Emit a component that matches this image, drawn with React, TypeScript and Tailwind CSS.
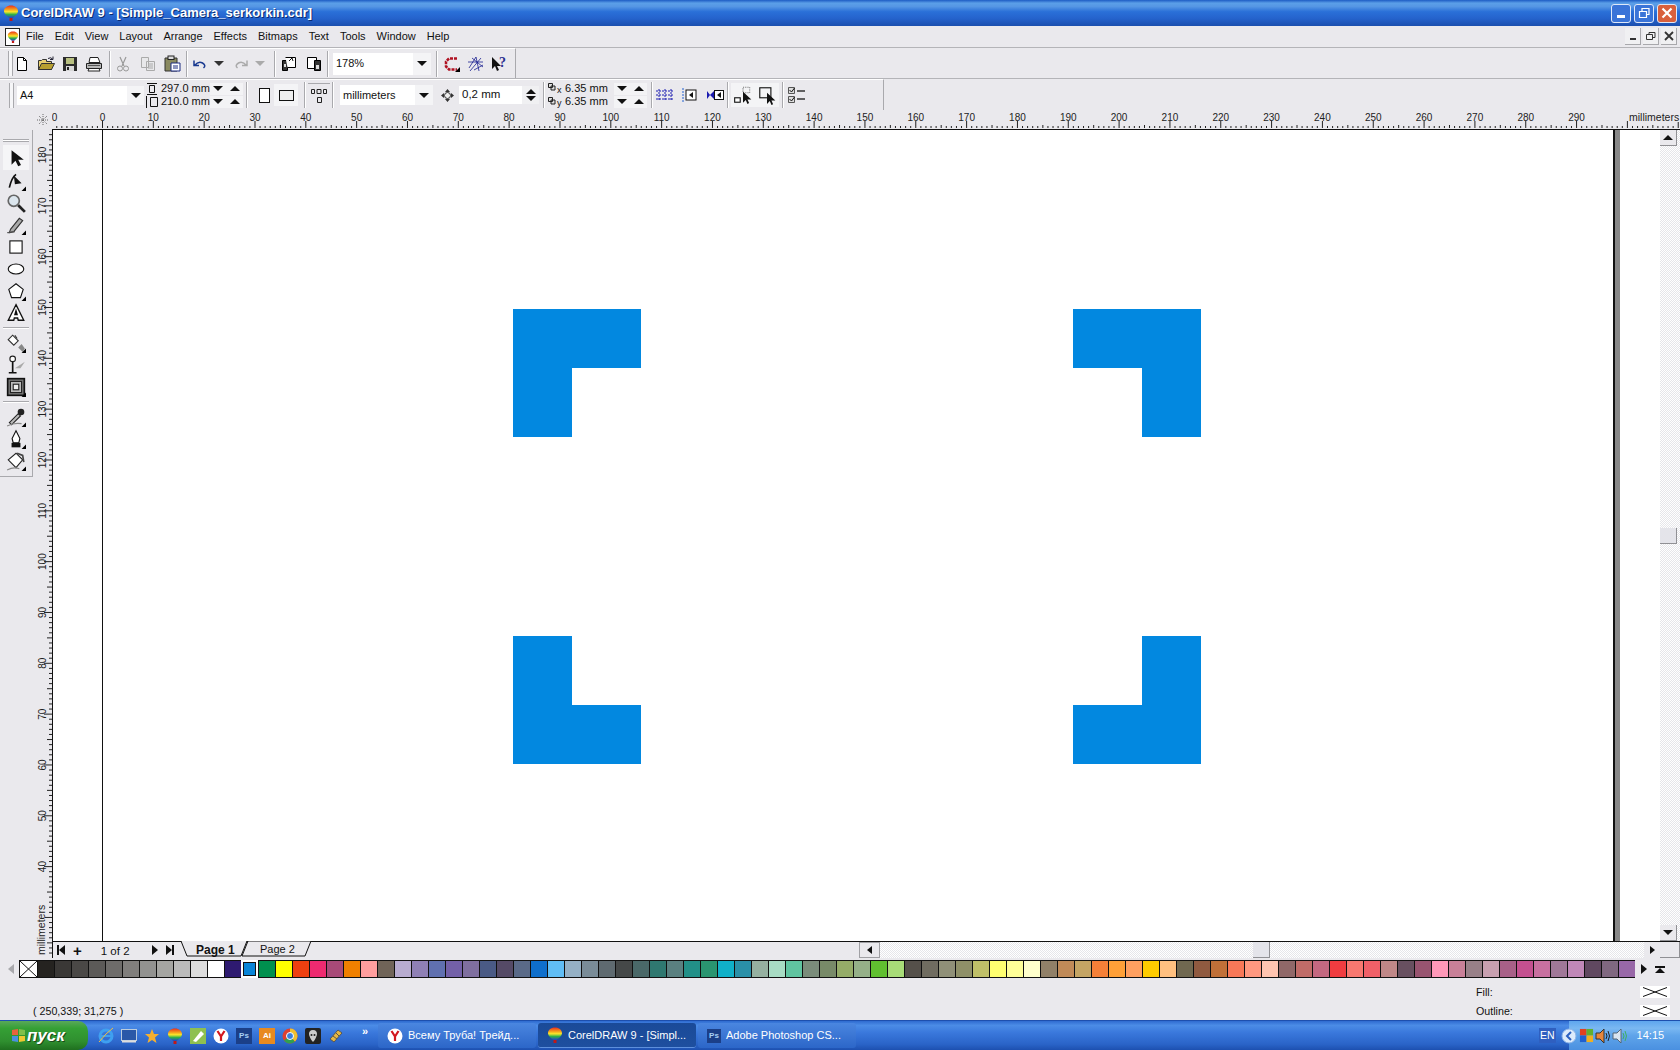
import React from "react";

const MM = 5.083;
const palette = ["#252320","#3a3836","#4a4846","#5c5a58","#6e6c6a","#807e7c","#929290","#a5a5a2","#bbbbbb","#dddddd","#ffffff","#2e1a70","#0a85d8","#00904e","#ffff00","#ee4010","#ee2a70","#a84a78","#f08000","#ff9e9e","#706458","#b8acd0","#8f80b5","#6070b0","#7360a8","#7f6f9f","#4a5a85","#554a66","#5a6a88","#0f6fcc","#60bdf5","#95b0c5","#7a8c98","#5f6a70","#454848","#4a6868","#2f7870","#5a8080","#229088","#2a9570","#10b0c8","#2a90a8","#95b0a0","#a8dcc4","#60c4a0","#7a8c7a","#788a68","#95ac68","#95b088","#60c030","#a8dc78","#55504a","#706c60","#909078","#8f9068","#c0c068","#ffff70","#ffff98","#ffffcc","#918068","#c08a58","#c4a464","#f58038","#ffa038","#ffa060","#ffcc00","#ffc080","#706850","#905a40","#c07038","#f87858","#ff9880","#ffc4b0","#906868","#c06c68","#c46880","#f03c40","#f87870","#f06068","#c08888","#685060","#985470","#ff98b8","#c88098","#988088","#c8a0b0","#a86088","#c45090","#c870a0","#a07898","#c088b8","#604860","#806880","#9868a8"];

const font = { fontFamily: '"Liberation Sans", Arial, sans-serif' };

function Balloon({ s = 16 }: { s?: number }) {
  const id = React.useId();
  return (
    <svg width={s} height={s} viewBox="0 0 16 16">
      <defs>
        <linearGradient id={id} x1="0" y1="0" x2="0" y2="1">
          <stop offset="0" stopColor="#e8301c" />
          <stop offset=".3" stopColor="#f59a1c" />
          <stop offset=".5" stopColor="#fbe72a" />
          <stop offset=".72" stopColor="#2fb04a" />
          <stop offset="1" stopColor="#2440c8" />
        </linearGradient>
      </defs>
      <path d="M8 .5C3.800 .5 1 3 1 6c0 3 3.500 5.500 5.500 7h3C11.500 11.500 15 9 15 6c0-3-2.800-5.500-7-5.500z" fill={`url(#${id})`} />
      <rect x="6.500" y="13" width="3" height="3" fill="#c01818" />
    </svg>
  );
}

function Grip() {
  return <div className="h-[25px] w-[5px] border-x border-[#a9a9ad] bg-[#f6f6f8]" />;
}
function Sep({ h = "h-[26px]" }: { h?: string }) {
  return <div className={`${h} w-[2px] border-l border-[#a9a9ad] bg-white`} />;
}
function Tri({ d = "down", c = "border-[#111]" }: { d?: "down" | "up"; c?: string }) {
  return d === "down" ? (
    <span className={`block h-0 w-0 border-x-[5px] border-t-[5px] border-x-transparent ${c === "border-[#111]" ? "border-t-[#111]" : c === "border-[#333]" ? "border-t-[#333]" : "border-t-[#aaa]"}`} />
  ) : (
    <span className="block h-0 w-0 border-x-[5px] border-b-[5px] border-x-transparent border-b-[#111]" />
  );
}
function Spin() {
  return (
    <div className="flex h-[12px] w-[33px] shrink-0 items-center justify-around bg-[#f3f3f5]">
      <Tri /><Tri d="up" />
    </div>
  );
}
const Sv = ({ children, s = 18, className = "" }: { children: React.ReactNode; s?: number; className?: string }) => (
  <svg width={s} height={s} viewBox="0 0 18 18" className={className}>{children}</svg>
);

const NewI = () => <Sv><path d="M4.500 2.500h6l3 3v10h-9z" fill="#fff" stroke="#000" /><path d="M10.500 2.500v3h3" fill="none" stroke="#000" /></Sv>;
const OpenI = () => <Sv><path d="M1.500 14.500v-9h3l1-1h4v2h5v8z" fill="#e8d070" stroke="#333" /><path d="M1.500 14.500l3-6h13l-3 6z" fill="#b8a030" stroke="#333" /><path d="M11 3.500q3-2 5 1m0-3v3h-3" fill="none" stroke="#223" /></Sv>;
const SaveI = () => <Sv><path d="M2 2h14v14H2z" fill="#2b2b2b" /><rect x="5" y="3" width="8" height="6" fill="#b8c080" /><rect x="5" y="11" width="8" height="5" fill="#d8d8d8" /><rect x="6" y="12" width="2" height="3" fill="#222" /></Sv>;
const PrintI = () => <Sv><path d="M5 2.500h8l2 5H4z" fill="#fff" stroke="#222" /><path d="M1.500 8.500h15v5h-15z" fill="#b8b8b8" stroke="#222" /><path d="M4 13.500h10l1 2.500H3z" fill="#fff" stroke="#222" /><path d="M3 10.500h12" stroke="#555" /></Sv>;
const CutI = () => <Sv><path d="M6 2l4 9M12 2l-4 9" stroke="#999" strokeWidth="1.200" /><circle cx="6" cy="13.500" r="2.500" fill="none" stroke="#999" /><circle cx="12" cy="13.500" r="2.500" fill="none" stroke="#999" /></Sv>;
const CopyI = () => <Sv><path d="M2.500 2.500h7v10h-7zM7.500 6.500h8v9h-8z" fill="#e8e8ea" stroke="#aaa" /><path d="M9 9h5M9 11h5M9 13h5" stroke="#aaa" /></Sv>;
const PasteI = () => <Sv><path d="M2 3h12v13H2z" fill="#8a8a60" stroke="#333" /><rect x="5" y="1" width="6" height="3.500" fill="#ddd" stroke="#222" /><path d="M8 8h9v8H8z" fill="#fff" stroke="#1a2a80" /><path d="M10 11h5M10 13h5" stroke="#1a2a80" /></Sv>;
const UndoI = ({ c = "#1a3a90" }: { c?: string }) => <Sv><path d="M4 5.500v5h5M4.500 10.500q4-5 8-2.500t1 5" fill="none" stroke={c} strokeWidth="1.500" /></Sv>;

const PageA = () => <Sv><path d="M2.500 5.500h5v10h-5z" fill="#333" stroke="#000" /><path d="M5.500 2.500h10v10h-8" fill="#fff" stroke="#000" /><path d="M9 6l3-3 1 3" fill="none" stroke="#111" /><path d="M4 9h2v3H4z" fill="#ddd" /></Sv>;
const PageB = () => <Sv><path d="M2.500 2.500h9v11h-9z" fill="#fff" stroke="#000" /><path d="M9.500 5.500h6v10h-6z" fill="#333" stroke="#000" /><path d="M11 10h3v4h-3z" fill="#ddd" /></Sv>;
const Snap = () => <Sv><path d="M14 3.500H6l-3 3v5l3 3h8" fill="none" stroke="#b01020" strokeWidth="2.500" strokeDasharray="3 1" /><path d="M12 17l5-5v5z" fill="#000" /></Sv>;
const Web = () => <Sv><path d="M2 13L9 2l3 14M1 7h15M5 3l11 9M3 16L14 3M7 15l9-5" fill="none" stroke="#1a2090" strokeWidth=".800" /></Sv>;
const Help = () => <Sv><path d="M2 2v12l3-3 2 5 2-1-2-4h4z" fill="#111" /><text x="9" y="12" fontSize="14" fontWeight="700" fill="#2a2f90" fontFamily="Liberation Serif">?</text></Sv>;

function HRuler() {
  const X0 = 50.5;
  const ticks: React.ReactNode[] = [];
  for (let v = -10; v <= 310; v++) {
    const x = X0 + v * MM;
    if (x < -2 || x > 1628) continue;
    const major = v % 10 === 0;
    const mid = v % 5 === 0;
    if (x >= 0) ticks.push(<line key={v} x1={x} x2={x} y1={major ? 11 : mid ? 15 : 16} y2={18} stroke="#222" strokeWidth="1" />);
    if (major && v <= 290) ticks.push(<text key={`l${v}`} x={x} y={11} fontSize="10" textAnchor="middle" fill="#222" style={font}>{Math.abs(v)}</text>);
  }
  return (
    <svg width="1628" height="20" className="block">
      {ticks}
      <rect x="1578" y="0" width="50" height="12" fill="#eae9ed" />
      <text x="1577" y="11" fontSize="10.500" fill="#222" style={font}>millimeters</text>
      <line x1="0" x2="1628" y1="19.500" y2="19.500" stroke="#111" />
    </svg>
  );
}

function VRuler() {
  const ticks: React.ReactNode[] = [];
  for (let v = 184; v >= 22; v--) {
    const y = 25 + (180 - v) * MM;
    if (y < 0 || y > 826) continue;
    const major = v % 10 === 0;
    const mid = v % 5 === 0;
    ticks.push(<line key={v} y1={y} y2={y} x1={major ? 11 : mid ? 14 : 16} x2={19} stroke="#222" />);
    if (major && v >= 40) ticks.push(<text key={`l${v}`} transform={`translate(12.500 ${y}) rotate(-90)`} fontSize="10" textAnchor="middle" fill="#222" style={font}>{v}</text>);
  }
  return (
    <svg width="19" height="828" className="block shrink-0">
      {ticks}
      <rect x="3" y="778" width="9" height="48" fill="#eae9ed" />
      <text transform="translate(12 825) rotate(-90)" fontSize="10.500" fill="#222" style={font}>millimeters</text>
    </svg>
  );
}

const Flag = () => <path d="M14 18l4-4v4z" fill="#000" />;
const toolIcon: Record<string, React.ReactNode> = {
  pick: <Sv s={20}><path d="M5 2v13l3.500-3.500 2.500 5 2.500-1.200-2.500-4.800h5z" fill="#111" /></Sv>,
  shape: <Sv s={20}><path d="M3 15Q5 6 9 3" fill="none" stroke="#111" strokeWidth="1.500" /><path d="M7 4l7 7-6 1z" fill="#111" /><Flag /></Sv>,
  zoom: <Sv s={20}><circle cx="7" cy="7" r="5" fill="#dce6ee" stroke="#666" strokeWidth="1.500" /><path d="M11 11l6 6" stroke="#222" strokeWidth="2.500" /></Sv>,
  free: <Sv s={20}><path d="M4 13L12 3l3 2-8 10-4 1z" fill="#aaa" stroke="#333" /><path d="M1 16q5-1 7-1" stroke="#555" fill="none" /><Flag /></Sv>,
  rect: <Sv s={20}><rect x="3.500" y="3.500" width="11" height="11" fill="#fff" stroke="#111" /></Sv>,
  ell: <Sv s={20}><ellipse cx="9" cy="9" rx="7" ry="4.500" fill="#fff" stroke="#111" /></Sv>,
  poly: <Sv s={20}><path d="M9 2.500l6.500 5-2.500 7.500H5L2.500 7.500z" fill="#fff" stroke="#111" /><Flag /></Sv>,
  text: <Sv s={20}><path d="M9 1.500l7 14h-5l-.500-2h-3l-.500 2H2zM9 7l-1 3.500h2z" fill="#fff" stroke="#111" strokeWidth="1.200" /></Sv>,
  fill2: <Sv s={20}><path d="M2 6l4-4 5 5-4 4z" fill="#fff" stroke="#333" /><path d="M8 2l2 3" stroke="#333" /><path d="M11 13l3-3 3 4-2 3z" fill="#888" /><Flag /></Sv>,
  blend: <Sv s={20}><circle cx="6" cy="3.500" r="2.500" fill="#fff" stroke="#222" /><path d="M6 6v10M2.500 16h7" stroke="#111" strokeWidth="1.500" /><path d="M8 12l9-6-4 6z" fill="#aaa" /></Sv>,
  cont: <Sv s={20}><rect x="1.500" y="1.500" width="15" height="15" fill="#777" stroke="#111" strokeWidth="1.500" /><rect x="4" y="4" width="10" height="10" fill="#bbb" stroke="#222" /><rect x="6.500" y="6.500" width="5" height="5" fill="#eee" stroke="#222" /><Flag /></Sv>,
  drop: <Sv s={20}><path d="M3 14L11 6l2 2-8 8z" fill="#bbb" stroke="#222" /><circle cx="13.500" cy="4.500" r="3" fill="#222" /><path d="M1 17q6-3 13-2" stroke="#888" fill="none" /><Flag /></Sv>,
  pen: <Sv s={20}><path d="M9 1.500l3.500 7-1 4h-5l-1-4z" fill="#fff" stroke="#111" /><rect x="5" y="12.500" width="8" height="4" fill="#111" /><Flag /></Sv>,
  buck: <Sv s={20}><path d="M2 8l7-6 6 6-6 7z" fill="#fff" stroke="#222" /><path d="M10 2l5 2 1 6" stroke="#444" fill="none" strokeWidth="1.500" /><path d="M1 17q6-3 11-1" stroke="#888" fill="none" /><Flag /></Sv>,
};

function ToolBox() {
  const Rule = () => <div className="my-[3px] h-[2px] w-[26px] border-t border-[#a9a9ad] bg-white" />;
  const T = ({ n }: { n: string }) => <div className="flex h-[22px] w-[24px] items-center justify-center">{toolIcon[n]}</div>;
  return (
    <div className="flex h-[347px] w-[33px] shrink-0 flex-col items-center border-b border-r border-[#a9a9ad] pt-[9px]">
      <div className="mb-[3px] h-[3px] w-[26px] border-y border-[#a9a9ad] bg-white" />
      <div className="flex h-[25px] w-[26px] items-center justify-center bg-[#f5f5f7]">{toolIcon.pick}</div>
      <T n="shape" /><T n="zoom" /><T n="free" /><T n="rect" /><T n="ell" /><T n="poly" /><T n="text" />
      <Rule />
      <T n="fill2" /><T n="blend" /><T n="cont" />
      <Rule />
      <T n="drop" /><T n="pen" /><T n="buck" />
    </div>
  );
}

function Corner({ d, cls }: { d: string; cls: string }) {
  return (
    <svg width="128" height="128" viewBox="0 0 128 128" className={`absolute ${cls}`}>
      <path d={d} fill="#0288e0" />
    </svg>
  );
}

const XBox = () => (
  <svg width="30" height="12" viewBox="0 0 30 12" className="bg-white"><path d="M3 1.500l24 9M27 1.500l-24 9" stroke="#111" /></svg>
);

const WinBtn = ({ children, cls }: { children: React.ReactNode; cls: string }) => (
  <div className={`flex h-[19px] w-[20px] items-center justify-center rounded-[3px] border border-[#dfe8f8] ${cls}`}>{children}</div>
);
const MdiBtn = ({ children }: { children: React.ReactNode }) => (
  <div className="flex h-[17px] w-[16px] items-center justify-center border-b border-r border-[#a8a8ac] bg-[#f0f0f2]">{children}</div>
);

const Task = ({ icon, label, active = false }: { icon: React.ReactNode; label: string; active?: boolean }) => (
  <div className={`flex h-[25px] w-[158px] items-center gap-[5px] rounded-[3px] pl-[9px] text-[11px] text-white ${active ? "bg-[linear-gradient(#1a4a98,#1e4f9f)] border-b border-[#5d8fdc]" : "bg-[linear-gradient(#4a86e0,#2c66c8)]"}`}>
    {icon}<span className="whitespace-nowrap">{label}</span>
  </div>
);
const Ya = ({ s = 16 }: { s?: number }) => (
  <svg width={s} height={s} viewBox="0 0 16 16"><circle cx="8" cy="8" r="7.500" fill="#fff" /><path d="M4.500 3l3.500 5.500V13M11.500 3L8 8.500" stroke="#d2171f" strokeWidth="2.200" fill="none" /></svg>
);
const Ps = ({ s = 16 }: { s?: number }) => (
  <div style={{ width: s, height: s }} className="flex items-center justify-center bg-[#1b3f88] text-[8px] font-bold text-[#a8d0f5]">Ps</div>
);

export default function App() {
  const menus = ["File", "Edit", "View", "Layout", "Arrange", "Effects", "Bitmaps", "Text", "Tools", "Window", "Help"];
  return (
    <div style={font} className="flex h-[1050px] w-[1680px] flex-col overflow-hidden bg-[#eae9ed] text-[11px] text-[#111]">
      {/* title */}
      <div className="flex h-[26px] shrink-0 items-center bg-[linear-gradient(#1d5cc4_0,#5b9fe8_12%,#5596e4_25%,#2a70d8_45%,#2563cd_70%,#1b4fae_100%)] pl-[3px] pr-[3px]">
        <Balloon s={16} />
        <span className="ml-[2px] text-[13px] font-bold text-white [text-shadow:1px_1px_#0a2a70]">CorelDRAW 9 - [Simple_Camera_serkorkin.cdr]</span>
        <div className="ml-auto flex gap-[3px]">
          <WinBtn cls="bg-[#3a74d8]"><div className="mt-[7px] h-[3px] w-[8px] bg-white" /></WinBtn>
          <WinBtn cls="bg-[#3a74d8]"><svg width="12" height="12"><path d="M1.500 4.500h7v6h-7zM4 4V1.500h7v6H9" fill="none" stroke="#fff" strokeWidth="1.200" /></svg></WinBtn>
          <WinBtn cls="bg-[#d9603c]"><svg width="12" height="12"><path d="M1.500 1.500l9 9M10.500 1.500l-9 9" stroke="#fff" strokeWidth="2.200" /></svg></WinBtn>
        </div>
      </div>
      {/* menu */}
      <div className="flex h-[21px] shrink-0 items-center pl-[5px] pr-[3px]">
        <div className="flex h-[18px] w-[15px] items-center justify-center border border-[#222] bg-white"><Balloon s={12} /></div>
        <div className="ml-[6px] flex gap-[11px]">{menus.map(m => <span key={m}>{m}</span>)}</div>
        <div className="ml-auto flex gap-[2px]">
          <MdiBtn><div className="mt-[6px] h-[2px] w-[6px] bg-[#333]" /></MdiBtn>
          <MdiBtn><svg width="10" height="10"><path d="M.500 3.500h6v5h-6zM3 3V1.500h6v5H7" fill="none" stroke="#333" /></svg></MdiBtn>
          <MdiBtn><svg width="10" height="10"><path d="M1 1l8 8M9 1l-8 8" stroke="#333" strokeWidth="1.800" /></svg></MdiBtn>
        </div>
      </div>
      {/* toolbar 1 */}
      <div className="h-[31px] shrink-0 border-t border-t-[#b4b4b8]">
        <div className="flex h-[30px] w-[516px] items-center border-r border-t border-r-[#a9a9ad] border-t-white pl-[8px]">
          <Grip />
          <div className="flex w-[90px] justify-between"><NewI /><OpenI /><SaveI /><PrintI /></div>
          <div className="ml-[6px]"><Sep /></div>
          <div className="ml-[3px] flex w-[67px] justify-between"><CutI /><CopyI /><PasteI /></div>
          <div className="ml-[5px]"><Sep /></div>
          <div className="ml-[2px] flex w-[84px] items-center">
            <UndoI />
            <span className="ml-[6px] block"><Tri c="border-[#333]" /></span>
            <span className="ml-[9px] block -scale-x-100"><UndoI c="#aaa" /></span>
            <span className="ml-[4px] block"><Tri c="border-[#aaa]" /></span>
          </div>
          <div className="ml-0"><Sep /></div>
          <div className="ml-[4px] flex w-[43px] justify-between"><PageA /><PageB /></div>
          <div className="ml-[4px]"><Sep /></div>
          <div className="ml-[4px] flex h-[22px] w-[98px] items-center bg-[#f4f4f6]">
            <div className="flex h-full flex-1 items-center bg-white pl-[3px]">178%</div>
            <div className="flex w-[18px] justify-center"><Tri /></div>
          </div>
          <div className="ml-[5px]"><Sep /></div>
          <div className="ml-[5px] flex w-[65px] items-center justify-between"><Snap /><Web /><Help /></div>
        </div>
      </div>
      {/* toolbar 2 */}
      <div className="h-[32px] shrink-0 border-t border-t-[#b4b4b8]">
        <div className="flex h-[31px] w-[884px] items-center border-r border-t border-r-[#a9a9ad] border-t-white pl-[9px]">
          <Grip />
          <div className="ml-[3px] flex h-[19px] w-[127px] shrink-0 items-center bg-[#f4f4f6]">
            <div className="flex h-full flex-1 items-center bg-white pl-[3px]">A4</div>
            <div className="flex w-[17px] justify-center"><Tri /></div>
          </div>
          <div className="ml-[2px] flex shrink-0 flex-col items-center gap-[1px]">
            <svg width="10" height="12"><path d="M0 .500h10M0 11.500h10M2.500 2.500h5v7h-5z" fill="none" stroke="#111" /></svg>
            <svg width="12" height="12"><path d="M.500 0v12M4.500 1.500h7v9h-7z" fill="none" stroke="#111" /></svg>
          </div>
          <div className="ml-[3px] flex shrink-0 flex-col leading-[13px]">
            <div className="flex items-center"><span className="w-[49px] whitespace-nowrap">297.0 mm</span><Spin /></div>
            <div className="flex items-center"><span className="w-[49px] whitespace-nowrap">210.0 mm</span><Spin /></div>
          </div>
          <div className="ml-[3px]"><Sep /></div>
          <div className="ml-[6px] flex h-[18px] w-[20px] items-center justify-center"><div className="h-[15px] w-[11px] border border-[#111] bg-white" /></div>
          <div className="flex h-[22px] w-[24px] items-center justify-center bg-[#f4f4f6]"><div className="h-[11px] w-[15px] border border-[#111] bg-[#eee]" /></div>
          <div className="ml-[6px]"><Sep /></div>
          <div className="ml-[2px] flex h-[24px] w-[22px] flex-col items-center justify-center gap-[2px] border-t border-[#a9a9ad]">
            <svg width="16" height="6"><path d="M.500 .500h3v4h-3zM6 .500h4v4H6zM12.500 .500h3v4h-3z" fill="none" stroke="#222" /></svg>
            <svg width="5" height="6"><path d="M.500 .500h4v5h-4z" fill="none" stroke="#222" /></svg>
          </div>
          <div className="ml-[2px]"><Sep /></div>
          <div className="ml-[6px] flex h-[20px] w-[93px] shrink-0 items-center bg-[#f4f4f6]">
            <div className="flex h-full flex-1 items-center bg-white pl-[3px]">millimeters</div>
            <div className="flex w-[18px] justify-center"><Tri /></div>
          </div>
          <div className="ml-[8px]">
            <svg width="13" height="13"><path d="M6.500 0l2.500 3H4zM6.500 13L4 10h5zM0 6.500L3 4v5zM13 6.500L10 9V4z" fill="#333" /><circle cx="6.500" cy="6.500" r="3" fill="#eee" stroke="#333" /></svg>
          </div>
          <div className="ml-[5px] flex h-[18px] w-[80px] shrink-0 items-center bg-white pl-[3px] text-[11.500px]">0,2 mm
            <div className="ml-auto flex h-full w-[17px] flex-col items-center justify-center gap-[2px] bg-[#f0f0f2]"><Tri d="up" /><Tri /></div>
          </div>
          <div className="ml-[4px]"><Sep /></div>
          <div className="ml-[3px] flex flex-col gap-[3px]">
            <svg width="16" height="11"><path d="M.500 .500h4v4h-4zM3 3h4v4H3z" fill="#ddd" stroke="#222" /><text x="9" y="10" fontSize="9" fill="#111">x</text></svg>
            <svg width="16" height="11"><path d="M.500 .500h4v4h-4zM3 3h4v4H3z" fill="#ddd" stroke="#222" /><text x="9" y="9" fontSize="9" fill="#111">y</text></svg>
          </div>
          <div className="ml-[1px] flex shrink-0 flex-col leading-[13px]">
            <div className="flex items-center"><span className="w-[49px] whitespace-nowrap">6.35 mm</span><Spin /></div>
            <div className="flex items-center"><span className="w-[49px] whitespace-nowrap">6.35 mm</span><Spin /></div>
          </div>
          <div className="ml-[4px]"><Sep /></div>
          <div className="ml-[3px]"><svg width="18" height="18" className="block"><path d="M3 3v12M9 3v12M15 3v12M0 5h18M0 9h18M0 13h18" stroke="#1a1ab0" strokeDasharray="2 1" /></svg></div>
          <div className="ml-[7px]"><svg width="18" height="18" className="block"><path d="M2 2v14" stroke="#2060d0" strokeDasharray="2 1" /><rect x="5" y="4" width="10" height="10" fill="#fff" stroke="#111" /><path d="M12 6v6l-4-3z" fill="#111" /></svg></div>
          <div className="ml-[7px]"><svg width="18" height="18" className="block"><path d="M1 5l3 4-3 4zM8 5L4 9l4 4z" fill="#1a1ab0" /><rect x="8.500" y="4.500" width="9" height="9" fill="#fff" stroke="#111" /><path d="M15 6v6l-4-3z" fill="#111" /></svg></div>
          <div className="ml-[3px]"><Sep /></div>
          <div className="ml-[2px] flex h-[24px] items-center bg-[#f4f4f6]">
            <div className="flex w-[24px] justify-center"><Sv s={20}><path d="M9 2h6v5H9z" fill="none" stroke="#777" strokeDasharray="1 1" /><rect x="1.500" y="11.500" width="5" height="4" fill="#fff" stroke="#111" /><path d="M9 6v10l2.500-2.500 1.500 3.500 1.500-.700-1.500-3.300h3.500z" fill="#111" /></Sv></div>
            <div className="flex w-[24px] justify-center"><Sv s={20}><rect x="2.500" y="2.500" width="10" height="9" fill="none" stroke="#111" /><path d="M9 7v10l2.500-2.500 1.500 3.500 1.500-.700-1.500-3.300h3.500z" fill="#111" /></Sv></div>
          </div>
          <div className="ml-[3px]"><Sep /></div>
          <div className="ml-[4px]"><svg width="18" height="16" className="block"><path d="M.500 .500h6v6h-6zM.500 9.500h6v6h-6z" fill="#ddd" stroke="#555" /><path d="M1.500 3l2 2 3-4M1.500 12l2 2 3-4" fill="none" stroke="#111" /><path d="M9 4h8M9 12h8" stroke="#333" strokeWidth="1.500" /></svg></div>
        </div>
      </div>
      {/* ruler row */}
      <div className="flex h-[20px] shrink-0">
        <div className="flex w-[52px] items-center justify-end border-l-[33px] border-transparent pr-[2px]">
          <svg width="14" height="14"><path d="M7 1v12M1 7h12M3 3l8 8M11 3l-8 8" stroke="#666" strokeDasharray="1 1" /></svg>
        </div>
        <HRuler />
      </div>
      {/* body */}
      <div className="flex h-[828px] shrink-0">
        <ToolBox />
        <VRuler />
        <div className="flex w-[1628px] flex-col border-l border-[#111]">
          <div className="flex h-[811px] shrink-0">
            <div className="relative flex-1 overflow-hidden bg-white">
              <div className="absolute bottom-0 left-[49px] top-0 w-px bg-[#111]" />
              <div className="absolute bottom-0 left-[1560px] top-0 w-[7px] border-l-2 border-[#111] bg-[#888888]" />
              <Corner cls="left-[460px] top-[179px]" d="M0 0H128V59H59V128H0Z" />
              <Corner cls="left-[1020px] top-[179px]" d="M0 0H128V128H69V59H0Z" />
              <Corner cls="left-[460px] top-[506px]" d="M0 0H59V69H128V128H0Z" />
              <Corner cls="left-[1020px] top-[506px]" d="M69 0H128V128H0V69H69Z" />
            </div>
            <div className="relative flex w-[20px] flex-col bg-[repeating-conic-gradient(#e6e6ea_0_25%,#fff_0_50%)] bg-[length:2px_2px]">
              <div className="flex h-[16px] w-[17px] items-center justify-center border-b border-r border-[#909094] bg-[#eae9ed]"><Tri d="up" /></div>
              <div className="absolute left-0 top-[398px] h-[16px] w-[17px] border-b border-r border-[#909094] bg-[#e4e4ea]" />
              <div className="mt-auto flex h-[16px] w-[17px] items-center justify-center border-b border-r border-[#909094] bg-[#eae9ed]"><Tri /></div>
            </div>
          </div>
          <div className="flex h-[17px] shrink-0 border-t border-[#111]">
            <div className="relative flex w-[806px] items-center">
              <span className="ml-[4px] flex items-center"><span className="h-[10px] w-[2px] bg-[#111]" /><span className="h-0 w-0 border-y-[5px] border-r-[6px] border-y-transparent border-r-[#111]" /></span>
              <span className="ml-[8px] text-[15px] font-bold leading-none">+</span>
              <span className="ml-[19px] mt-[3px] text-[11.500px]">1 of 2</span>
              <span className="ml-[22px] h-0 w-0 border-y-[5px] border-l-[6px] border-y-transparent border-l-[#111]" />
              <span className="ml-[8px] flex items-center"><span className="h-0 w-0 border-y-[5px] border-l-[6px] border-y-transparent border-l-[#111]" /><span className="h-[10px] w-[2px] bg-[#111]" /></span>
              <svg width="130" height="17" className="absolute left-[128px] top-[-1px]">
                <path d="M0 0l6 15h54l6-15" fill="#eae9ed" stroke="#111" />
                <path d="M61 15l6-15h63l-6 15z" fill="#eae9ed" stroke="#111" />
              </svg>
              <span className="absolute left-[143px] top-[-1px] text-[12px] font-bold">Page 1</span>
              <span className="absolute left-[207px] top-[-1px] text-[11px]">Page 2</span>
            </div>
            <div className="flex flex-1 items-stretch bg-[repeating-conic-gradient(#e6e6ea_0_25%,#fff_0_50%)] bg-[length:2px_2px]">
              <div className="flex w-[21px] items-center justify-center border border-[#a0a0a4] bg-[#eae9ed]"><span className="h-0 w-0 border-y-[4px] border-r-[5px] border-y-transparent border-r-[#111]" /></div>
              <div className="ml-[373px] w-[17px] border-b border-r border-[#909094] bg-[#e4e4ea]" />
              <div className="ml-auto flex w-[16px] items-center justify-center bg-[#eae9ed]"><span className="h-0 w-0 border-y-[4px] border-l-[5px] border-y-transparent border-l-[#111]" /></div>
              <div className="w-[20px] border-b border-r border-[#909094] bg-[#eae9ed]" />
            </div>
          </div>
        </div>
      </div>
      {/* palette */}
      <div className="flex h-[22px] shrink-0 items-center pl-[8px]">
        <span className="h-0 w-0 border-y-[5px] border-r-[6px] border-y-transparent border-r-[#a8a8ac]" />
        <div className="ml-[5px] flex h-[18px] w-[1616px] border border-[#111]">
          <svg width="17" height="16" className="shrink-0 bg-white"><path d="M0 0l17 16M17 0L0 16" stroke="#111" /></svg>
          {palette.map((c, i) => (
            <div key={i} className={i === 12 ? "-my-px h-[18px] w-[17px] shrink-0 border-[2px] border-white outline outline-1 -outline-offset-3 outline-[#111]" : "h-full w-[17px] shrink-0 border-l border-[#111]"} style={{ backgroundColor: c }} />
          ))}
        </div>
        <span className="ml-[6px] h-0 w-0 border-y-[5px] border-l-[6px] border-y-transparent border-l-[#111]" />
        <span className="ml-[8px] flex flex-col items-center"><span className="h-[2px] w-[10px] bg-[#111]" /><Tri d="up" /></span>
      </div>
      {/* status */}
      <div className="flex h-[40px] shrink-0 pl-[33px] text-[10.700px] leading-[12px]">
        <span className="mt-[25px]">( 250,339; 31,275 )</span>
        <div className="ml-auto flex w-[204px] flex-col gap-[7px] pr-[10px] pt-[6px]">
          <div className="flex items-center justify-between"><span>Fill:</span><XBox /></div>
          <div className="flex items-center justify-between"><span>Outline:</span><XBox /></div>
        </div>
      </div>
      {/* taskbar */}
      <div className="flex h-[30px] shrink-0 items-center border-t border-[#1d4fae] bg-[linear-gradient(#2f6bd0,#4b8ce6_15%,#3a78dc_40%,#2a64c8_80%,#1d50b0)]">
        <div className="flex h-full w-[88px] shrink-0 items-center rounded-r-[10px] bg-[linear-gradient(#5aa85a,#35a035_25%,#2f8f2f_70%,#1f6f1f)] pl-[11px] [text-shadow:1px_1px_#1a4a1a]">
          <svg width="15" height="15" viewBox="0 0 15 15"><path d="M1 2l6-1v6H1z" fill="#e8643c" /><path d="M8 1l6 1v5H8z" fill="#7fc04a" /><path d="M1 8h6v6l-6-1z" fill="#4a90e0" /><path d="M8 8h6v5l-6 1z" fill="#f0c830" /></svg>
          <span className="ml-[1px] text-[17px] font-bold italic leading-none text-white">пуск</span>
        </div>
        <div className="ml-[10px] flex w-[280px] shrink-0 items-center gap-[7px] [&>*]:shrink-0">
          <svg width="16" height="17" viewBox="0 0 16 17"><ellipse cx="8" cy="9" rx="6" ry="6" fill="none" stroke="#3fa0f0" strokeWidth="3" /><path d="M3 9h10" stroke="#3fa0f0" strokeWidth="2" /><path d="M1 15Q8 6 15 1" stroke="#f0c040" fill="none" /></svg>
          <svg width="16" height="14" viewBox="0 0 16 14"><rect x=".500" y=".500" width="15" height="11" fill="#2a58a8" stroke="#bcd" /><path d="M1 12.500h14" stroke="#ddd" strokeWidth="2" /></svg>
          <svg width="16" height="16" viewBox="0 0 16 16"><path d="M8 1l2 5h5l-4 3.500 1.500 5.500L8 12l-4.500 3L5 9.500 1 6h5z" fill="#f5b030" /></svg>
          <Balloon s={16} />
          <svg width="16" height="16" viewBox="0 0 16 16"><rect width="16" height="16" fill="#8ec050" /><path d="M3 13L11 3l3 3-8 8z" fill="#fff" /></svg>
          <Ya />
          <Ps s={16} />
          <div className="flex h-[16px] w-[16px] items-center justify-center bg-[#e88a20] text-[8px] font-bold text-white">Ai</div>
          <svg width="16" height="16" viewBox="0 0 16 16"><circle cx="8" cy="8" r="7.500" fill="#e04030" /><path d="M8 8L2 12.500A7.500 7.500 0 0 0 13 13.500z" fill="#30a050" /><path d="M8 .500a7.500 7.500 0 0 1 5 13L8 8z" fill="#f0c030" /><circle cx="8" cy="8" r="3.500" fill="#3a80e0" stroke="#fff" /></svg>
          <svg width="16" height="16" viewBox="0 0 16 16"><rect width="16" height="16" rx="2" fill="#222" /><path d="M8 2c3 0 4 2 4 4s-2 6-4 8c-2-2-4-6-4-8s1-4 4-4z" fill="#ccc" /><circle cx="6.500" cy="7" r="1" fill="#222" /><circle cx="9.500" cy="7" r="1" fill="#222" /></svg>
          <svg width="16" height="16" viewBox="0 0 16 16"><path d="M2 11L10 2l4 3-8 9z" fill="#e8b840" stroke="#555" /><path d="M5 8l4 3M8 5l3 3" stroke="#555" /></svg>
          <span className="-mt-[8px] ml-[11px] text-[11px] font-bold text-white">»</span>
        </div>
        <div className="flex shrink-0 gap-[2px]">
          <Task icon={<Ya />} label="Всему Труба! Трейд..." />
          <Task active icon={<Balloon s={16} />} label="CorelDRAW 9 - [Simpl..." />
          <Task icon={<Ps s={14} />} label="Adobe Photoshop CS..." />
        </div>
        <div className="ml-auto flex h-full w-[111px] items-center bg-[linear-gradient(#5ea6ee,#7ab8f2_25%,#5fa4ea_50%,#4a90e0)] pl-0 text-[11px] text-white">
          <span className="-ml-[30px] bg-[#2f5fc0] px-[1px] text-[10.500px]">EN</span>
          <svg width="16" height="16" viewBox="0 0 16 16" className="ml-[5px]"><circle cx="8" cy="8" r="7" fill="#dcebfb" stroke="#8cb4e8" /><path d="M10 4L6 8l4 4" fill="none" stroke="#2a60c0" strokeWidth="2" /></svg>
          <svg width="15" height="15" viewBox="0 0 16 16" className="ml-[2px]"><rect x="1" y="1" width="7" height="7" fill="#e04020" /><rect x="8" y="1" width="7" height="7" fill="#60b030" /><rect x="1" y="8" width="7" height="7" fill="#2060d0" /><rect x="8" y="8" width="7" height="7" fill="#f0b020" /></svg>
          <svg width="16" height="16" viewBox="0 0 16 16" className="ml-[1px]"><path d="M1 5h4l4-4v14l-4-4H1z" fill="#e8863a" stroke="#333" /><path d="M11 5q2 3 0 6M13 3q3 5 0 10" stroke="#222" fill="none" /></svg>
          <svg width="16" height="16" viewBox="0 0 16 16" className="ml-[1px]"><path d="M1 5h4l4-4v14l-4-4H1z" fill="#d8e4f0" stroke="#567" /><path d="M11 5q2 3 0 6M13 3q3 5 0 10" stroke="#40b060" fill="none" /></svg>
          <span className="ml-[9px]">14:15</span>
        </div>
      </div>
    </div>
  );
}
